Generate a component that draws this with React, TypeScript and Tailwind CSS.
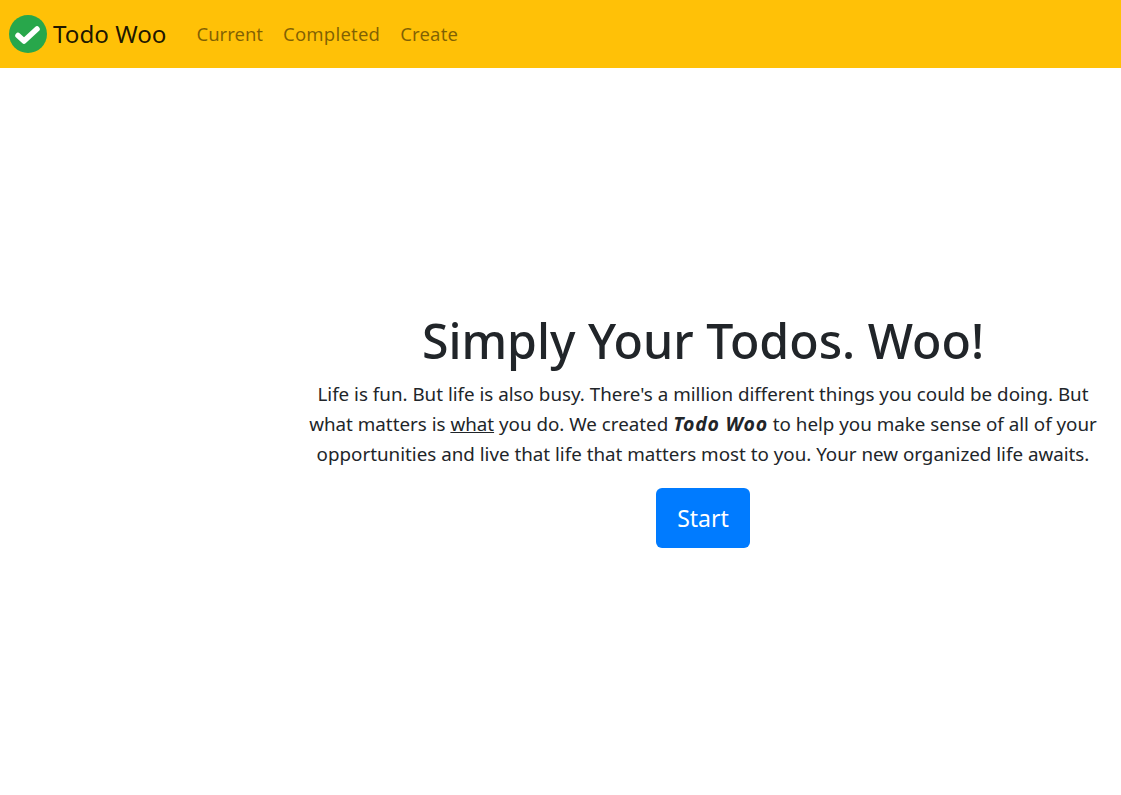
export default function App() {
  return (
    <div className="min-h-[795px] bg-white font-['Noto_Sans',sans-serif] text-[#212529]">
      <nav className="flex h-[68px] items-center bg-[#ffc107] pl-[9px]">
        <a className="flex items-center gap-[5px] text-[24.2px] text-black/90">
          <svg width="39" height="39" viewBox="0 0 39 39">
            <circle cx="19" cy="19" r="19" fill="#28a74b" />
            <path d="M9 20.5l6 5.5L28 14" fill="none" stroke="#fff" strokeWidth="5.5" strokeLinecap="round" strokeLinejoin="round" />
          </svg>
          Todo Woo
        </a>
        <div className="ml-[30px] flex gap-5 text-[18.5px] text-black/50">
          <a>Current</a>
          <a className="tracking-[0.2px]">Completed</a>
          <a className="tracking-[0.2px]">Create</a>
        </div>
      </nav>
      <div className="flex">
        <div className="w-[285px]" />
        <main className="flex w-[836px] flex-col items-center pt-[242px] text-center">
          <h1 className="text-[48.2px] font-medium leading-[60px]">Simply Your Todos. Woo!</h1>
          <p className="mt-[9px] w-[800px] text-[18.8px] leading-[30px]">
            Life is fun. But life is also busy. There's a million different things you could be doing. But what matters is <u>what</u> you do. We created <b className="text-[19.5px] leading-[20px] tracking-[0.8px]"><i>Todo Woo</i></b> to help you make sense of all of your opportunities and live that life that matters most to you. Your new organized life awaits.
          </p>
          <button className="mt-[19px] h-[60px] w-[94px] rounded-md bg-[#007bff] pt-[1px] text-[23px] text-white">Start</button>
        </main>
      </div>
    </div>
  );
}
